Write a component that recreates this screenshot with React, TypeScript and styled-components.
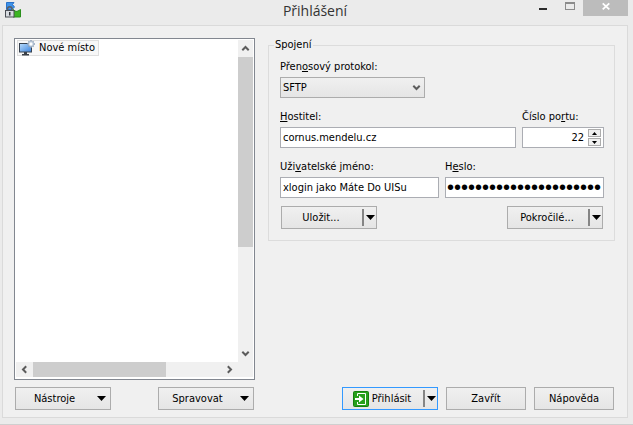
import React from "react";
import styled, { createGlobalStyle, css } from "styled-components";

const GlobalStyle = createGlobalStyle`
  * { box-sizing: border-box; }
  body { margin: 0; background: #ebebeb; }
  body, button, input, select {
    font-family: "DejaVu Sans Condensed", "DejaVu Sans", sans-serif;
    font-size: 11px;
    line-height: 14px;
    color: #000;
  }
`;

const Window = styled.div`
  display: flex;
  flex-direction: column;
  min-height: 100vh;
  padding: 0 5px 6px 2px;
  background: #ebebeb;
  border-bottom: 1px solid #cfcfcf;
`;

const TitleBar = styled.header`
  display: grid;
  grid-template-columns: 1fr auto 1fr;
  align-items: start;
  height: 25px;
`;

const AppIcon = styled.svg`
  width: 18px;
  height: 18px;
  margin: 1px 0 0 2px;
`;

const Title = styled.h1`
  margin: 0;
  font: 400 14px/22px "Open Sans", sans-serif;
  color: #333;
`;

const CaptionButtons = styled.div`
  display: flex;
  justify-content: flex-end;
`;

const CaptionButton = styled.button<{ $close?: boolean }>`
  display: block;
  width: ${(p) => (p.$close ? 45 : 27)}px;
  height: 16px;
  padding: 0;
  border: 0;
  background: ${(p) => (p.$close ? "#bcbcbc" : "transparent")};
  svg { display: block; margin: 0 auto 5px; }
`;

const Client = styled.main`
  flex: 1;
  display: flex;
  flex-direction: column;
  gap: 7px;
  padding: 12px 12px 7px 11px;
  background: #f0f0f0;
  border: 1px solid #dadada;
`;

const Content = styled.div`
  flex: 1;
  display: flex;
  gap: 13px;
`;

const SiteList = styled.section`
  display: grid;
  grid-template: 1fr 15px / 1fr 15px;
  width: 241px;
  padding: 1px 1px 2px;
  background: #fff;
  border: 1px solid #828790;
`;

const Sites = styled.ul`
  margin: 0;
  padding: 0 0 0 1px;
  list-style: none;
`;

const Site = styled.li`
  display: inline-flex;
  align-items: center;
  gap: 3px;
  height: 16px;
  padding: 0 3px 0 1px;
  background: #f7f7f7;
  border: 1px solid #dedede;
`;

const ScrollBar = styled.div<{ $horizontal?: boolean }>`
  display: flex;
  flex-direction: ${(p) => (p.$horizontal ? "row" : "column")};
  background: #f0f0f0;
`;

const ScrollButton = styled.button`
  display: grid;
  place-items: center;
  flex: 0 0 17px;
  padding: 0;
  border: 0;
  background: transparent;
`;

const ScrollTrack = styled.div<{ $horizontal?: boolean }>`
  flex: 1;
  display: flex;
  flex-direction: ${(p) => (p.$horizontal ? "row" : "column")};
`;

const ScrollThumb = styled.div<{ $share: number }>`
  flex: 0 0 ${(p) => p.$share}%;
  background: #cdcdcd;
`;

const Corner = styled.div`
  background: #f0f0f0;
`;

const Group = styled.fieldset`
  flex: 1;
  align-self: flex-start;
  min-width: 0;
  margin: 0;
  padding: 8px 10px 11px 11px;
  border: 1px solid #dcdcdc;
`;

const Legend = styled.legend`
  margin-left: -6px;
  padding: 0 1px;
`;

const Rows = styled.div`
  display: flex;
  flex-direction: column;
  gap: 12px;
`;

const Row = styled.div<{ $columns: string }>`
  display: grid;
  grid-template-columns: ${(p) => p.$columns};
  gap: 6px;
`;

const Field = styled.div`
  display: flex;
  flex-direction: column;
  gap: 3px;
  min-width: 0;
`;

const Label = styled.label`
  white-space: nowrap;
`;

const boxed = css`
  width: 100%;
  height: 21px;
  margin: 0;
  border: 1px solid #abadb3;
  border-radius: 0;
  outline: none;
`;

const TextBox = styled.input`
  ${boxed}
  padding: 0 2px;
  background: #fff;
  &[type="password"] {
    padding: 0 1px;
    font-family: "Liberation Sans", sans-serif;
    font-size: 20px;
  }
`;

const Combo = styled.div`
  display: grid;
  width: 145px;
  align-items: center;
  > * { grid-area: 1 / 1; }
  svg { justify-self: end; margin-right: 4px; pointer-events: none; }
`;

const Select = styled.select`
  ${boxed}
  appearance: none;
  padding: 0 2px;
  border-color: #acacac;
  background: linear-gradient(#f0f0f0, #e5e5e5);
`;

const Spinner = styled.div`
  ${boxed}
  display: flex;
  padding: 1px 2px 1px 0;
  background: #fff;
`;

const SpinnerInput = styled.input`
  flex: 1;
  min-width: 0;
  padding: 0 4px 0 0;
  border: 0;
  outline: none;
  text-align: right;
  background: transparent;
`;

const SpinnerButtons = styled.div`
  display: flex;
  flex-direction: column;
  gap: 1px;
  width: 13px;
`;

const SpinnerButton = styled.button`
  flex: 1;
  display: grid;
  place-items: center;
  padding: 0;
  border: 1px solid #acacac;
  background: #f0f0f0;
`;

const Actions = styled.div`
  display: flex;
  justify-content: space-between;
  margin-top: 8px;
  padding: 0 1px;
`;

const Footer = styled.footer`
  display: flex;
  justify-content: space-between;
  gap: 13px;
  padding: 0 1px;
`;

const FooterTools = styled.div`
  display: flex;
  justify-content: space-between;
  width: 239px;
`;

const FooterActions = styled.div`
  display: flex;
  gap: 8px;
`;

const face = css<{ $primary?: boolean }>`
  height: 23px;
  border: 1px solid ${(p) => (p.$primary ? "#3399ff" : "#acacac")};
  background: linear-gradient(#f0f0f0, #e5e5e5);
`;

const PushButton = styled.button`
  ${face}
  width: 80px;
  padding: 0;
`;

const MenuButton = styled.button`
  ${face}
  display: flex;
  align-items: center;
  width: 96px;
  padding: 0 4px 0 0;
  span { flex: 1; padding-right: 4px; text-align: center; }
`;

const SplitBox = styled.div<{ $primary?: boolean }>`
  ${face}
  display: flex;
  align-items: stretch;
  width: 96px;
`;

const SplitMain = styled.button`
  flex: 1;
  display: flex;
  align-items: center;
  justify-content: center;
  gap: 3px;
  padding: 0 2px 0 0;
  border: 0;
  background: transparent;
`;

const SplitMenu = styled.button`
  display: grid;
  place-items: center;
  width: 14px;
  margin: 2px 0;
  padding: 0;
  border: 0;
  border-left: 2px solid #858585;
  background: transparent;
`;

const DropArrow = () => (
  <svg width="9" height="5" viewBox="0 0 9 5" aria-hidden="true">
    <path d="M0 0H9L4.5 5Z" fill="#000" />
  </svg>
);

const turns = { up: 0, right: 90, down: 180, left: 270 };

const Chevron = ({ to }: { to: keyof typeof turns }) => (
  <svg width="9" height="9" viewBox="0 0 9 9" aria-hidden="true">
    <path
      d="M1.3 6.2L4.5 3L7.7 6.2"
      fill="none"
      stroke="#5c5c5c"
      strokeWidth="2"
      transform={`rotate(${turns[to]} 4.5 4.5)`}
    />
  </svg>
);

const SiteIcon = () => (
  <svg width="17" height="16" viewBox="0 0 17 16" aria-hidden="true">
    <defs>
      <linearGradient id="screen" x1="0" y1="0" x2="1" y2="1">
        <stop offset="0" stopColor="#b9dcfc" />
        <stop offset="1" stopColor="#3c83dc" />
      </linearGradient>
    </defs>
    <rect x="0.5" y="3.5" width="12" height="8.5" fill="url(#screen)" stroke="#38424f" />
    <path d="M5 12H8V14H10V15.5H3V14H5Z" fill="#3a4048" />
    <path
      d="M12 0V8M8 4H16M9.4 1.4L14.6 6.6M14.6 1.4L9.4 6.6"
      stroke="#8fa3ba"
      strokeWidth="1.5"
    />
    <circle cx="12" cy="4" r="2.2" fill="#fff" stroke="#b4c3d5" />
  </svg>
);

const LoginIcon = () => (
  <svg width="16" height="16" viewBox="0 0 16 16" aria-hidden="true">
    <rect x="0.5" y="0.5" width="15" height="15" rx="1" fill="#27a01c" stroke="#16800f" />
    <path d="M4.5 5V2.5H12.5V13.5H4.5V11" fill="none" stroke="#fff" />
    <path d="M2 7H6V4.5L10.5 8L6 11.5V9H2Z" fill="#fff" />
  </svg>
);

const Split = ({
  children,
  primary,
  menuLabel,
}: {
  children: React.ReactNode;
  primary?: boolean;
  menuLabel: string;
}) => (
  <SplitBox $primary={primary}>
    <SplitMain type="button">{children}</SplitMain>
    <SplitMenu type="button" aria-label={menuLabel}>
      <DropArrow />
    </SplitMenu>
  </SplitBox>
);

export default function App() {
  return (
    <>
      <GlobalStyle />
      <Window>
        <TitleBar>
          <AppIcon viewBox="0 0 18 18" aria-hidden="true">
            <path d="M2.5 1.5H10L8.5 3.5L10.5 6L8 8.5H2.5Z" fill="#3d92ea" stroke="#2a72c8" />
            <path d="M9 8.5L12 10.5L14 10L16.5 8.5V16H9Z" fill="#3cb521" stroke="#2a8f1c" />
            <path d="M3.5 10V8A2.2 2.2 0 0 1 8 8V10" fill="none" stroke="#5a5f66" strokeWidth="1.5" />
            <rect x="1.5" y="9.5" width="8.5" height="6.5" fill="#d8dbe0" stroke="#4a4e55" />
            <path d="M5.75 11V14.5" stroke="#30343a" strokeWidth="1.5" />
          </AppIcon>
          <Title>Přihlášení</Title>
          <CaptionButtons>
            <CaptionButton type="button" aria-label="Minimalizovat">
              <svg width="10" height="11" viewBox="0 0 10 11">
                <path d="M1 8H9V10H1Z" fill="#2b2b2b" />
              </svg>
            </CaptionButton>
            <CaptionButton type="button" aria-label="Maximalizovat">
              <svg width="10" height="11" viewBox="0 0 10 11">
                <path d="M0 2H10V10H0ZM1 4V9H9V4Z" fill="#8c8c8c" fillRule="evenodd" />
              </svg>
            </CaptionButton>
            <CaptionButton type="button" $close aria-label="Zavřít okno">
              <svg width="8" height="11" viewBox="0 0 8 11">
                <path d="M0.7 3.4L7.3 9.4M7.3 3.4L0.7 9.4" stroke="#fff" strokeWidth="1.8" />
              </svg>
            </CaptionButton>
          </CaptionButtons>
        </TitleBar>

        <Client>
          <Content>
            <SiteList>
              <Sites>
                <Site>
                  <SiteIcon />
                  Nové místo
                </Site>
              </Sites>
              <ScrollBar>
                <ScrollButton type="button" aria-label="Nahoru">
                  <Chevron to="up" />
                </ScrollButton>
                <ScrollTrack>
                  <ScrollThumb $share={66} />
                </ScrollTrack>
                <ScrollButton type="button" aria-label="Dolů">
                  <Chevron to="down" />
                </ScrollButton>
              </ScrollBar>
              <ScrollBar $horizontal>
                <ScrollButton type="button" aria-label="Vlevo">
                  <Chevron to="left" />
                </ScrollButton>
                <ScrollTrack $horizontal>
                  <ScrollThumb $share={71} />
                </ScrollTrack>
                <ScrollButton type="button" aria-label="Vpravo">
                  <Chevron to="right" />
                </ScrollButton>
              </ScrollBar>
              <Corner />
            </SiteList>

            <Group>
              <Legend>Spojení</Legend>
              <Rows>
                <Field>
                  <Label htmlFor="protocol">
                    Přen<u>o</u>sový protokol:
                  </Label>
                  <Combo>
                    <Select id="protocol" defaultValue="SFTP">
                      <option>SFTP</option>
                    </Select>
                    <Chevron to="down" />
                  </Combo>
                </Field>
                <Row $columns="1fr 82px">
                  <Field>
                    <Label htmlFor="host">
                      <u>H</u>ostitel:
                    </Label>
                    <TextBox id="host" defaultValue="cornus.mendelu.cz" />
                  </Field>
                  <Field>
                    <Label htmlFor="port">
                      Číslo po<u>r</u>tu:
                    </Label>
                    <Spinner>
                      <SpinnerInput id="port" defaultValue="22" />
                      <SpinnerButtons>
                        <SpinnerButton type="button" aria-label="Zvýšit">
                          <svg width="5" height="3" viewBox="0 0 5 3">
                            <path d="M0 3H5L2.5 0Z" />
                          </svg>
                        </SpinnerButton>
                        <SpinnerButton type="button" aria-label="Snížit">
                          <svg width="5" height="3" viewBox="0 0 5 3">
                            <path d="M0 0H5L2.5 3Z" />
                          </svg>
                        </SpinnerButton>
                      </SpinnerButtons>
                    </Spinner>
                  </Field>
                </Row>
                <Row $columns="1fr 1fr">
                  <Field>
                    <Label htmlFor="user">
                      Uži<u>v</u>atelské jméno:
                    </Label>
                    <TextBox id="user" defaultValue="xlogin jako Máte Do UISu" />
                  </Field>
                  <Field>
                    <Label htmlFor="password">
                      H<u>e</u>slo:
                    </Label>
                    <TextBox id="password" type="password" defaultValue={"x".repeat(22)} />
                  </Field>
                </Row>
              </Rows>
              <Actions>
                <Split menuLabel="Možnosti uložení">Uložit...</Split>
                <Split menuLabel="Další možnosti">Pokročilé...</Split>
              </Actions>
            </Group>
          </Content>

          <Footer>
            <FooterTools>
              <MenuButton type="button">
                <span>Nástroje</span>
                <DropArrow />
              </MenuButton>
              <MenuButton type="button">
                <span>Spravovat</span>
                <DropArrow />
              </MenuButton>
            </FooterTools>
            <FooterActions>
              <Split primary menuLabel="Možnosti přihlášení">
                <LoginIcon />
                Přihlásit
              </Split>
              <PushButton type="button">Zavřít</PushButton>
              <PushButton type="button">Nápověda</PushButton>
            </FooterActions>
          </Footer>
        </Client>
      </Window>
    </>
  );
}
